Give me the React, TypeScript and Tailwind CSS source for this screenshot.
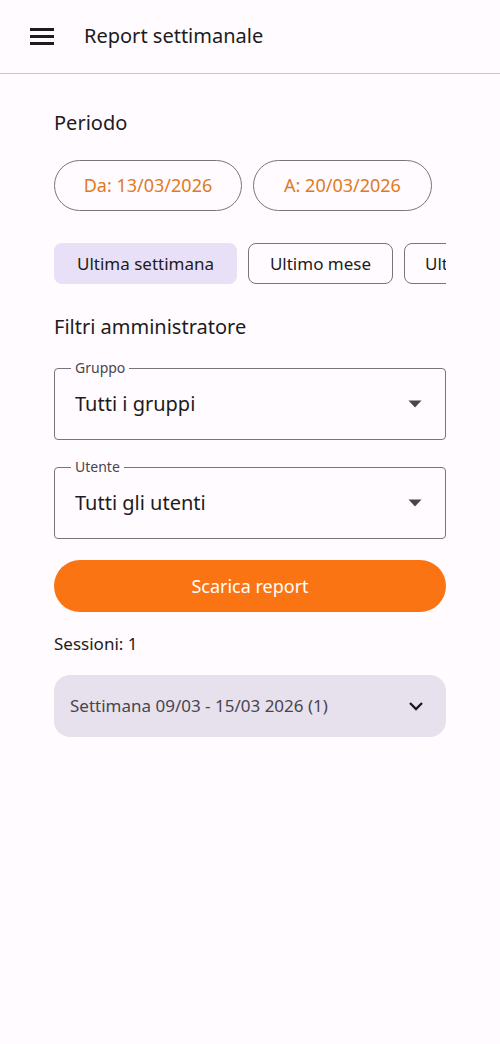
import React from 'react'

const font = { fontFamily: '"Noto Sans", "Open Sans", sans-serif' }

function SelectField({ label, value }: { label: string; value: string }) {
    return (
        <div className="relative border border-[#79747e] rounded-[4px] h-[72px] pl-[20px] pr-[23px] flex items-center justify-between">
            {/* label sits on the outline */}
            <span className="absolute left-[16px] -top-[11px] px-[4px] bg-[#fffbfe] text-[14px] leading-[20px] text-[#49454f]">
                {label}
            </span>
            <span className="text-[20px] text-[#1d1b20]">{value}</span>
            <svg width="14" height="8" viewBox="0 0 14 8">
                <path d="M0.5 0.5 L13.5 0.5 L7 7.5 Z" fill="#49454f" />
            </svg>
        </div>
    )
}

export default function App() {
    return (
        <div className="min-h-[1044px] bg-[#fffbfe] text-[#1d1b20]" style={font}>
            {/* Top bar */}
            <div className="h-[74px] flex items-center border-b border-[#c9c5cc]">
                <div className="ml-[30px] w-[24px] flex flex-col gap-[4px]">
                    <span className="block h-[3px] bg-[#1d1b20]" />
                    <span className="block h-[3px] bg-[#1d1b20]" />
                    <span className="block h-[3px] bg-[#1d1b20]" />
                </div>
                <h1 className="ml-[30px] text-[20px] leading-[24px] -mt-[2px]">Report settimanale</h1>
            </div>

            <div className="px-[54px] pt-[36px]">
                <div className="text-[20px] leading-[26px]">Periodo</div>

                <div className="flex gap-[11px] mt-[24px]">
                    <button className="h-[51px] w-[188px] rounded-full border border-[#79747e] text-[#e07a1f] text-[18px]">
                        Da: 13/03/2026
                    </button>
                    <button className="h-[51px] w-[179px] rounded-full border border-[#79747e] text-[#e07a1f] text-[18px]">
                        A: 20/03/2026
                    </button>
                </div>

                <div className="flex gap-[11px] mt-[32px] overflow-hidden w-[392px]">
                    <div className="h-[41px] shrink-0 w-[183px] justify-center rounded-[8px] bg-[#e8e0f6] flex items-center text-[17px] text-[#1d1b20]">
                        Ultima settimana
                    </div>
                    <div className="h-[41px] shrink-0 w-[145px] justify-center rounded-[8px] border border-[#79747e] flex items-center text-[17px] text-[#1d1b20]">
                        Ultimo mese
                    </div>
                    <div className="h-[41px] shrink-0 px-[20px] rounded-[8px] border border-[#79747e] flex items-center text-[17px] text-[#1d1b20]">
                        Ultimi 3 mesi
                    </div>
                </div>

                <div className="text-[20px] leading-[26px] mt-[30px]">Filtri amministratore</div>

                <div className="mt-[28px]">
                    <SelectField label="Gruppo" value="Tutti i gruppi" />
                </div>
                <div className="mt-[27px]">
                    <SelectField label="Utente" value="Tutti gli utenti" />
                </div>

                <button className="mt-[21px] w-full h-[52px] rounded-full bg-[#fb7413] text-white text-[18px]">
                    Scarica report
                </button>

                <div className="mt-[20px] text-[17px] leading-[24px]">Sessioni: 1</div>

                <div className="mt-[19px] h-[62px] rounded-[16px] bg-[#e6e1ec] flex items-center justify-between pl-[16px] pr-[22px]">
                    <span className="text-[17px] text-[#49454f]">Settimana 09/03 - 15/03 2026 (1)</span>
                    <svg width="16" height="10" viewBox="0 0 16 10">
                        <path d="M2 2 L8 8 L14 2" fill="none" stroke="#1d1b20" strokeWidth="2.4" />
                    </svg>
                </div>
            </div>
        </div>
    )
}
